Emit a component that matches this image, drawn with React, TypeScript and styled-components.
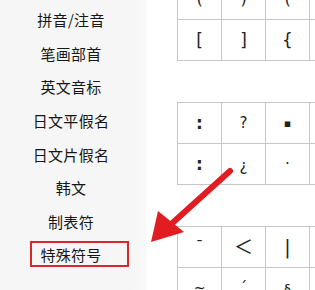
import React from "react";
import styled, { createGlobalStyle } from "styled-components";

const Global = createGlobalStyle`
  html, body { margin: 0; padding: 0; background: #ffffff; }
  body { width: 315px; height: 290px; overflow: hidden; font-family: "Noto Sans CJK SC", "Noto Sans", sans-serif; }
`;

const Page = styled.div`
  position: relative;
  display: flex;
  width: 315px;
  height: 290px;
  overflow: hidden;
  background: #ffffff;
`;

const Sidebar = styled.div`
  width: 147px;
  flex: none;
  display: flex;
  flex-direction: column;
  padding-top: 3px;
  padding-right: 5px;
  box-sizing: border-box;
  background: linear-gradient(to right, #f6f6f6 0%, #f6f6f6 90%, #fafafa 100%);
`;

const NavItem = styled.div`
  position: relative;
  height: 33.6px;
  display: flex;
  align-items: center;
  justify-content: center;
  font-size: 15px;
  color: #161616;
  letter-spacing: 0.3px;
`;

const Highlight = styled.div`
  position: absolute;
  left: 30px;
  top: 3px;
  width: 99px;
  height: 26px;
  box-sizing: border-box;
  border: 2px solid #d42a2a;
`;

const Main = styled.div`
  flex: 1;
  padding-left: 30px;
  display: flex;
  flex-direction: column;
  gap: 41px;
  margin-top: -22px;
`;

const Table = styled.div`
  display: grid;
  grid-template-columns: repeat(4, 44px);
  border-top: 1px solid #c6c6c6;
  border-left: 1px solid #c6c6c6;
  width: max-content;
`;

const Cell = styled.div<{ $size?: number; $weight?: number; $shift?: number }>`
  width: 43px;
  height: 40px;
  border-right: 1px solid #c6c6c6;
  border-bottom: 1px solid #c6c6c6;
  display: flex;
  align-items: center;
  justify-content: center;
  font-family: "DejaVu Sans", "Noto Sans CJK SC", sans-serif;
  font-size: ${(p) => p.$size ?? 15}px;
  font-weight: ${(p) => p.$weight ?? 400};
  color: #222;
  line-height: 1;
  padding-top: ${(p) => p.$shift ?? 0}px;
  box-sizing: content-box;
  height: ${(p) => 40 - (p.$shift ?? 0)}px;
`;

const Arrow = styled.svg`
  position: absolute;
  left: 0;
  top: 0;
  pointer-events: none;
`;

const navItems = ["拼音/注音", "笔画部首", "英文音标", "日文平假名", "日文片假名", "韩文", "制表符", "特殊符号"];

type Glyph = { c: string; size?: number; weight?: number; shift?: number };

const tables: Glyph[][][] = [
  [
    [{ c: "(", size: 16 }, { c: ")", size: 16 }, { c: "(", size: 16 }, { c: "" }],
    [{ c: "[", size: 17 }, { c: "]", size: 17 }, { c: "{", size: 17 }, { c: "" }],
  ],
  [
    [{ c: ":", size: 17, weight: 700 }, { c: "?", size: 15 }, { c: "▪", size: 11 }, { c: "" }],
    [{ c: ":", size: 17, weight: 700 }, { c: "¿", size: 15, shift: 4 }, { c: "·", size: 15 }, { c: "" }],
  ],
  [
    [{ c: "ˉ", size: 15 }, { c: "＜", size: 19 }, { c: "|", size: 19 }, { c: "" }],
    [{ c: "~", size: 14 }, { c: "ˊ", size: 15 }, { c: "§", size: 13 }, { c: "" }],
  ],
];

export default function App() {
  return (
    <>
      <Global />
      <Page>
        <Sidebar>
          {navItems.map((t) => (
            <NavItem key={t}>
              {t}
              {t === "特殊符号" && <Highlight />}
            </NavItem>
          ))}
        </Sidebar>
        <Main>
          {tables.map((rows, ti) => (
            <Table key={ti}>
              {rows.flatMap((r, ri) =>
                r.map((g, ci) => (
                  <Cell key={`${ri}-${ci}`} $size={g.size} $weight={g.weight} $shift={g.shift}>
                    {g.c}
                  </Cell>
                ))
              )}
            </Table>
          ))}
        </Main>
        <Arrow width="315" height="290" viewBox="0 0 315 290">
          <line x1="230" y1="171" x2="168" y2="227" stroke="#e11d22" strokeWidth="6" strokeLinecap="round" />
          <polygon points="151,242 158,211 184,232" fill="#e11d22" />
        </Arrow>
      </Page>
    </>
  );
}
